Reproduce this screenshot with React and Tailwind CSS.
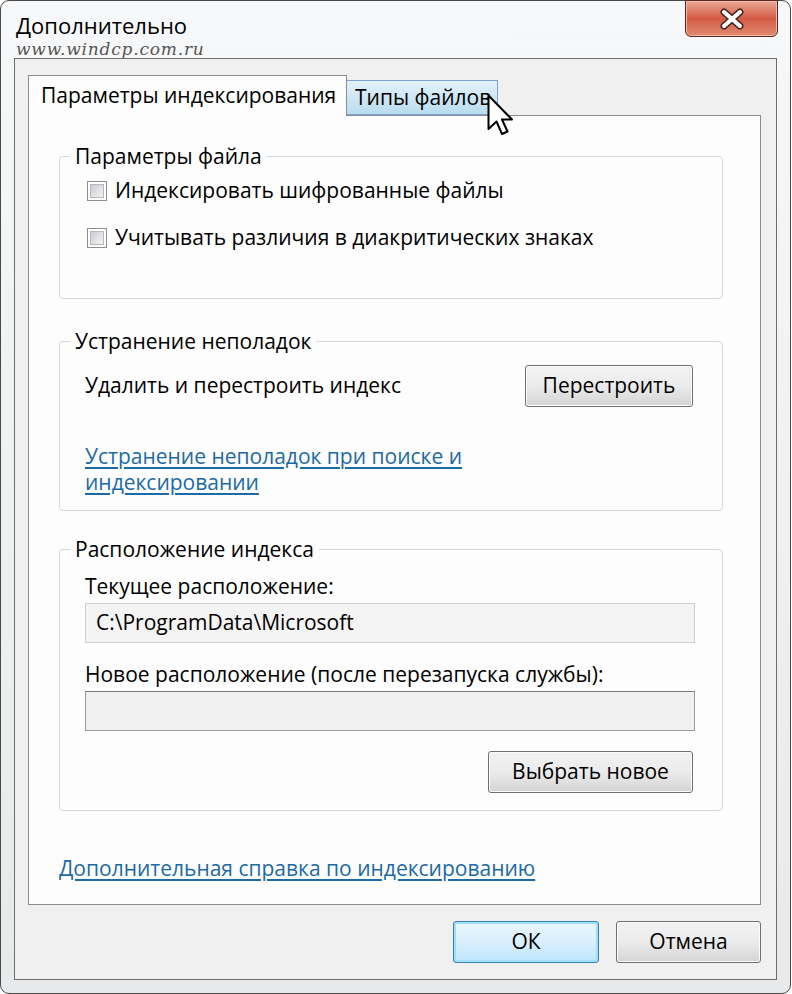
// App.jsx — диалог «Дополнительно» (параметры индексирования Windows 7)

const font = { fontFamily: '"Open Sans", "Noto Sans", "Liberation Sans", sans-serif' };

function Checkbox() {
  return (
    <div className="w-[20px] h-[20px] border border-[#8e8f8f] bg-white p-[2px] shrink-0">
      <div className="w-full h-full border border-[#b4b8bd] bg-gradient-to-br from-[#c9cdd2] to-[#f4f4f4]" />
    </div>
  );
}

function Button({ children, width, primary }) {
  return (
    <button
      className={`${width} h-[42px] rounded-[3px] border text-[21px] text-black ${
        primary
          ? 'border-[#3c7fb1] bg-gradient-to-b from-[#eaf6fd] via-[#d9f0fc] to-[#bee6fd] shadow-[inset_0_0_0_2px_#9fe0f7]'
          : 'border-[#707070] bg-gradient-to-b from-[#f2f2f2] via-[#ebebeb] to-[#d4d4d4] shadow-[inset_0_0_0_1px_#fcfcfc]'
      }`}
    >
      {children}
    </button>
  );
}

function GroupBox({ title, children, className = '' }) {
  return (
    <fieldset className={`border border-[#d5d9dc] rounded-[4px] w-[664px] ${className}`}>
      <legend className="ml-[10px] px-[5px] text-[21px] leading-[24px] text-black">{title}</legend>
      {children}
    </fieldset>
  );
}

function Cursor() {
  return (
    <svg className="absolute left-[487px] top-[94px]" width="26" height="46" viewBox="0 0 26 46">
      <path
        d="M1.5 1.5 L1.5 35 L9.5 27.5 L15 40 L20.5 37.5 L15 25.5 L25 25.5 Z"
        fill="white"
        stroke="black"
        strokeWidth="2"
        strokeLinejoin="round"
      />
    </svg>
  );
}

export default function App() {
  return (
    <div className="relative w-[792px] h-[994px] bg-white" style={font}>
      {/* рамка окна */}
      <div className="w-[791px] h-[994px] border border-[#4a4a4a] rounded-[9px] bg-gradient-to-b from-[#f7f8f9] to-[#e7e9eb] px-[13px] pb-[13px] flex flex-col">
        {/* заголовок */}
        <div className="h-[57px] flex justify-between shrink-0">
          <div className="pl-[2px] pt-[12px] flex flex-col">
            <span className="text-[22px] leading-[24px] text-black">Дополнительно</span>
            <span
              className="mt-[5px] text-[17px] leading-[15px] italic text-[#555] tracking-[0.8px]"
              style={{ fontFamily: '"DejaVu Serif", serif' }}
            >
              www.windcp.com.ru
            </span>
          </div>
          <div className="w-[93px] h-[37px] mr-[-1px] mt-[-1px] rounded-b-[6px] border border-[#5a2a22] bg-gradient-to-b from-[#e9a897] via-[#d35a44] to-[#e08a70] shadow-[inset_0_0_0_1px_#f2b9a9] flex items-center justify-center">
            <svg width="30" height="22" viewBox="0 0 30 22">
              <path d="M7 4 L23 18 M23 4 L7 18" stroke="#4a2a24" strokeWidth="7" strokeLinecap="round" />
              <path d="M7 4 L23 18 M23 4 L7 18" stroke="#ffffff" strokeWidth="4" strokeLinecap="round" />
            </svg>
          </div>
        </div>

        {/* клиентская область */}
        <div className="flex-1 border border-[#6d6d6d] bg-[#f0f0f0] pl-[13px] pt-[15px] flex flex-col">
          {/* вкладки */}
          <div className="flex items-end h-[41px]">
            <div className="relative z-10 -mb-px w-[319px] h-[41px] border border-b-0 border-[#898c95] bg-[#fdfdfd] flex items-center pl-[12px] text-[21px] text-black">
              Параметры индексирования
            </div>
            <div className="w-[151px] h-[35px] border border-l-0 border-[#7da2ce] bg-gradient-to-b from-[#e3f2fb] to-[#b9dcee] flex items-center pl-[8px] text-[21px] text-black">
              Типы файлов
            </div>
          </div>

          {/* панель вкладки */}
          <div className="w-[733px] h-[790px] border border-[#898c95] bg-[#fdfdfd] pl-[30px] pt-[28px] flex flex-col">
            <GroupBox title="Параметры файла">
              <div className="pl-[27px] pt-[11px] pb-[48px] flex flex-col gap-[23px]">
                <div className="flex items-center gap-[8px] h-[24px]">
                  <Checkbox />
                  <span className="text-[21px] text-black">Индексировать шифрованные файлы</span>
                </div>
                <div className="flex items-center gap-[8px] h-[24px]">
                  <Checkbox />
                  <span className="text-[21px] text-black">Учитывать различия в диакритических знаках</span>
                </div>
              </div>
            </GroupBox>

            <GroupBox title="Устранение неполадок" className="mt-[30px]">
              <div className="pl-[25px] pr-[29px] pt-[13px] pb-[15px] flex flex-col">
                <div className="flex items-center justify-between h-[40px]">
                  <span className="text-[21px] text-black">Удалить и перестроить индекс</span>
                  <Button width="w-[168px]">Перестроить</Button>
                </div>
                <a className="mt-[37px] w-[400px] text-[21px] leading-[26px] text-[#1c6aa6] underline underline-offset-[3px]">
                  Устранение неполадок при поиске и индексировании
                </a>
              </div>
            </GroupBox>

            <GroupBox title="Расположение индекса" className="mt-[26px]">
              <div className="pl-[25px] pr-[27px] pt-[13px] pb-[17px] flex flex-col">
                <span className="text-[21px] leading-[24px] text-black">Текущее расположение:</span>
                <div className="mt-[5px] h-[40px] border border-[#cfcfcf] bg-[#f4f4f4] flex items-center pl-[10px] text-[21px] text-black">
                  C:\ProgramData\Microsoft
                </div>
                <span className="mt-[19px] text-[21px] leading-[24px] text-black">
                  Новое расположение (после перезапуска службы):
                </span>
                <div className="mt-[5px] h-[40px] border border-[#9a9a9a] border-t-[#7a7a7a] bg-[#f0f0f0]" />
                <div className="mt-[20px] flex justify-end pr-[2px]">
                  <Button width="w-[205px]">Выбрать новое</Button>
                </div>
              </div>
            </GroupBox>

            <a className="mt-[44px] text-[21px] leading-[26px] text-[#1c6aa6] underline underline-offset-[3px] self-start">
              Дополнительная справка по индексированию
            </a>
          </div>

          {/* кнопки диалога */}
          <div className="mt-[16px] flex justify-end gap-[17px] pr-[15px]">
            <Button width="w-[146px]" primary>
              ОК
            </Button>
            <Button width="w-[145px]">Отмена</Button>
          </div>
        </div>
      </div>
      <Cursor />
    </div>
  );
}
